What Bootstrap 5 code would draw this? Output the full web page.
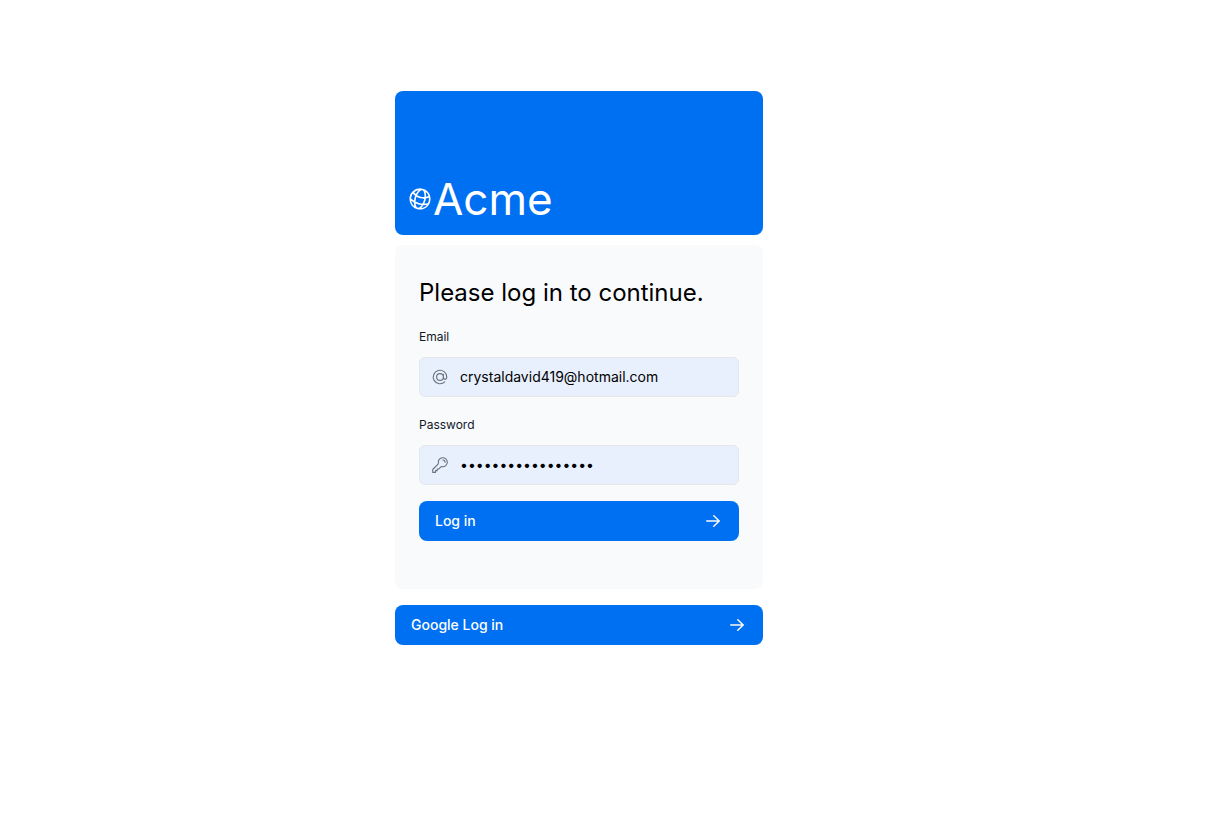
<!DOCTYPE html>
<html lang="en">
<head>
<meta charset="utf-8">
<meta name="viewport" content="width=device-width, initial-scale=1">
<title>Acme – Log in</title>
<link href="https://cdn.jsdelivr.net/npm/bootstrap@5.3.0/dist/css/bootstrap.min.css" rel="stylesheet">
<style>
  body { font-family: Inter, "Liberation Sans", sans-serif; color: #000; background: #fff; }
  .login-page { padding: 91px 63px 16px 16px; }
  .login-column { max-width: 368px; }
  .banner { height: 144px; padding: 12px; background: #0070f3; border-radius: 8px; color: #fff; }
  .brand { font-size: 44px; line-height: 48px; }
  .brand svg { width: 26px; height: 26px; transform: rotate(15deg); }
  .panel { margin-top: 10px; padding: 32px 24px 48px; background: #f9fafc; border-radius: 8px; }
  .panel h1 { font-size: 24px; line-height: 32px; font-weight: 400; margin-bottom: 20px; }
  .panel label { font-size: 12px; line-height: 16px; color: #111827; margin-bottom: 12px; }
  .field + .field { margin-top: 20px; }
  .field .form-control { height: 40px; padding: 0 12px 2px 40px; font-size: 14px; line-height: 20px; color: #000; background: #e8f0fe; border-color: #e5e7eb; border-radius: 6px; }
  .field-icon { width: 18px; height: 18px; left: 12px; color: #6b7280; pointer-events: none; }
  .btn-login { height: 40px; margin-top: 16px; padding: 0 16px; font-size: 14px; line-height: 20px; font-weight: 500; border: 0; border-radius: 8px; --bs-btn-bg: #0070f3; --bs-btn-color: #fff; --bs-btn-hover-bg: #3291ff; --bs-btn-hover-color: #fff; --bs-btn-active-bg: #0761d1; --bs-btn-active-color: #fff; }
  .btn-login svg { width: 20px; height: 20px; color: #f9fafb; }
</style>
</head>
<body>
<svg class="d-none" aria-hidden="true">
  <symbol id="arrow" viewBox="0 0 20 20"><path fill="currentColor" fill-rule="evenodd" d="M3 10a.75.75 0 01.75-.75h10.638L10.23 5.29a.75.75 0 111.04-1.08l5.5 5.25a.75.75 0 010 1.08l-5.5 5.25a.75.75 0 11-1.04-1.08l4.158-3.96H3.75A.75.75 0 013 10z"/></symbol>
</svg>
<main class="login-page">
  <div class="login-column mx-auto">
    <div class="banner d-flex align-items-end">
      <div class="brand d-flex align-items-center">
        <svg viewBox="0 0 24 24" fill="none" stroke="currentColor" stroke-width="1.5" stroke-linecap="round" stroke-linejoin="round" aria-hidden="true"><path d="M12 21a9.004 9.004 0 008.716-6.747M12 21a9.004 9.004 0 01-8.716-6.747M12 21c2.485 0 4.5-4.03 4.5-9S14.485 3 12 3m0 18c-2.485 0-4.5-4.03-4.5-9S9.515 3 12 3m0 0a8.997 8.997 0 017.843 4.582M12 3a8.997 8.997 0 00-7.843 4.582m15.686 0A11.953 11.953 0 0112 10.5c-2.998 0-5.74-1.1-7.843-2.918m15.686 0A8.959 8.959 0 0121 12c0 .778-.099 1.533-.284 2.253m0 0A17.919 17.919 0 0112 16.5c-3.162 0-6.133-.815-8.716-2.247m0 0A9.015 9.015 0 013 12c0-1.605.42-3.113 1.157-4.418"/></svg>
        <span>Acme</span>
      </div>
    </div>
    <form class="panel">
      <h1>Please log in to continue.</h1>
      <div class="field">
        <label class="d-block" for="email">Email</label>
        <div class="position-relative d-flex align-items-center">
          <input class="form-control" id="email" type="email" name="email" value="crystaldavid419@hotmail.com">
          <svg class="field-icon position-absolute" viewBox="0 0 24 24" fill="none" stroke="currentColor" stroke-width="1.5" stroke-linecap="round" aria-hidden="true"><path d="M16.5 12a4.5 4.5 0 11-9 0 4.5 4.5 0 019 0zm0 0c0 1.657 1.007 3 2.25 3S21 13.657 21 12a9 9 0 10-2.636 6.364M16.5 12V8.25"/></svg>
        </div>
      </div>
      <div class="field">
        <label class="d-block" for="password">Password</label>
        <div class="position-relative d-flex align-items-center">
          <input class="form-control" id="password" type="password" name="password" value="correcthorse12345">
          <svg class="field-icon position-absolute" viewBox="0 0 24 24" fill="none" stroke="currentColor" stroke-width="1.5" stroke-linecap="round" stroke-linejoin="round" aria-hidden="true"><path d="M15.75 5.25a3 3 0 013 3m3 0a6 6 0 01-7.029 5.912c-.563-.097-1.159.026-1.563.43L10.5 17.25H8.25v2.25H6v2.25H2.25v-2.818c0-.597.237-1.17.659-1.591l6.499-6.499c.404-.404.527-1 .43-1.563A6 6 0 1121.75 8.25z"/></svg>
        </div>
      </div>
      <button class="btn btn-login w-100 d-flex align-items-center justify-content-between" type="submit">Log in <svg aria-hidden="true"><use href="#arrow"/></svg></button>
    </form>
    <button class="btn btn-login w-100 d-flex align-items-center justify-content-between" type="button">Google Log in <svg aria-hidden="true"><use href="#arrow"/></svg></button>
  </div>
</main>
<script src="https://cdn.jsdelivr.net/npm/bootstrap@5.3.0/dist/js/bootstrap.bundle.min.js"></script>
</body>
</html>
